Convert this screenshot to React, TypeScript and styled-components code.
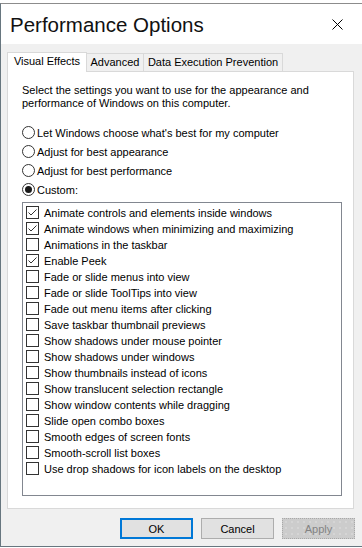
import React from "react";
import styled, { createGlobalStyle, css } from "styled-components";

const GlobalStyle = createGlobalStyle`
  html, body {
    margin: 0;
    padding: 0;
    background: #ffffff;
  }
  body {
    font-family: "Liberation Sans", Arial, sans-serif;
    font-size: 11px;
    color: #000000;
  }
  * { box-sizing: border-box; }
`;

const Window = styled.div`
  width: 362px;
  height: 548px;
  display: flex;
  flex-direction: column;
  background: #ffffff;
`;

const TopStrip = styled.div`
  height: 3px;
  flex: none;
  background: #ffffff;
`;

const Frame = styled.div`
  flex: 1;
  display: flex;
  flex-direction: column;
  border-top: 1px solid #8c8c8c;
  border-left: 1px solid #67767f;
  border-bottom: 1px solid #67767f;
  margin-bottom: 1px;
`;

const TitleBar = styled.div`
  height: 40px;
  flex: none;
  display: flex;
  align-items: center;
  justify-content: space-between;
  padding: 1px 19px 0 9px;
  background: #ffffff;
`;

const Title = styled.div`
  font-size: 20.5px;
  color: #111111;
  line-height: 1.15;
`;

const CloseButton = styled.div`
  width: 11px;
  height: 11px;
  display: flex;
  margin-top: 0px;
`;

const Body = styled.div`
  flex: 1;
  display: flex;
  flex-direction: column;
  background: #f0f0f0;
  padding: 8px 0 0 6px;
`;

const TabStrip = styled.div`
  display: flex;
  align-items: flex-end;
  height: 19px;
  flex: none;
`;

const Tab = styled.div<{ $active?: boolean; $width: number }>`
  width: ${(p) => p.$width}px;
  line-height: 13px;
  text-align: center;
  white-space: nowrap;
  border: 1px solid #d9d9d9;
  border-bottom: none;
  ${(p) =>
    p.$active
      ? css`
          height: 20px;
          padding-top: 2px;
          margin-bottom: -1px;
          background: #ffffff;
          position: relative;
          z-index: 1;
        `
      : css`
          height: 18px;
          padding-top: 2px;
          margin-left: -1px;
          background: #f0f0f0;
        `}
`;

const Panel = styled.div`
  height: 438px;
  flex: none;
  margin-right: 8px;
  border: 1px solid #d9d9d9;
  background: #ffffff;
  padding: 12px 11px 0 14px;
  display: flex;
  flex-direction: column;
`;

const Intro = styled.p`
  margin: 0;
  line-height: 13px;
`;

const RadioGroup = styled.div`
  margin-top: 13px;
  display: flex;
  flex-direction: column;
`;

const RadioRow = styled.div`
  height: 19px;
  display: flex;
  align-items: center;
  gap: 2px;
`;

const RadioCircle = styled.span<{ $checked?: boolean }>`
  width: 13px;
  height: 13px;
  border: 1px solid #333333;
  border-radius: 50%;
  background: #ffffff;
  display: flex;
  align-items: center;
  justify-content: center;
  flex: none;
  &::after {
    content: "";
    width: 7px;
    height: 7px;
    border-radius: 50%;
    background: ${(p) => (p.$checked ? "#1a1a1a" : "transparent")};
  }
`;

const ListBox = styled.div`
  margin-top: 3px;
  height: 294px;
  flex: none;
  border: 1px solid #828790;
  padding: 1px 0 0 3px;
  display: flex;
  flex-direction: column;
`;

const CheckRow = styled.div`
  height: 16px;
  display: flex;
  align-items: flex-start;
  white-space: nowrap;
`;

const CheckBox = styled.span`
  width: 13px;
  height: 13px;
  margin-top: 2px;
  border: 1px solid #333333;
  background: #ffffff;
  flex: none;
  display: flex;
  align-items: center;
  justify-content: center;
`;

const CheckLabel = styled.span`
  margin-left: 5px;
  line-height: 16px;
  padding-top: 1px;
`;

const ButtonRow = styled.div`
  display: flex;
  justify-content: flex-end;
  gap: 8px;
  padding-right: 7px;
  margin-top: 9px;
`;

const DialogButton = styled.div<{ $variant?: "default" | "normal" | "disabled" }>`
  width: 73px;
  height: 21px;
  display: flex;
  align-items: center;
  justify-content: center;
  background: #e1e1e1;
  border: 1px solid #adadad;
  ${(p) =>
    p.$variant === "default" &&
    css`
      border: 2px solid #0078d7;
    `}
  ${(p) =>
    p.$variant === "disabled" &&
    css`
      background-color: #cccccc;
      background-image: radial-gradient(circle, #dadada 0.6px, transparent 0.9px);
      background-size: 6px 6px;
      border: 1px dotted #a8a8a8;
      color: #838383;
    `}
`;

const items: { label: string; checked: boolean }[] = [
  { label: "Animate controls and elements inside windows", checked: true },
  { label: "Animate windows when minimizing and maximizing", checked: true },
  { label: "Animations in the taskbar", checked: false },
  { label: "Enable Peek", checked: true },
  { label: "Fade or slide menus into view", checked: false },
  { label: "Fade or slide ToolTips into view", checked: false },
  { label: "Fade out menu items after clicking", checked: false },
  { label: "Save taskbar thumbnail previews", checked: false },
  { label: "Show shadows under mouse pointer", checked: false },
  { label: "Show shadows under windows", checked: false },
  { label: "Show thumbnails instead of icons", checked: false },
  { label: "Show translucent selection rectangle", checked: false },
  { label: "Show window contents while dragging", checked: false },
  { label: "Slide open combo boxes", checked: false },
  { label: "Smooth edges of screen fonts", checked: false },
  { label: "Smooth-scroll list boxes", checked: false },
  { label: "Use drop shadows for icon labels on the desktop", checked: false },
];

const radios = [
  { label: "Let Windows choose what's best for my computer", checked: false },
  { label: "Adjust for best appearance", checked: false },
  { label: "Adjust for best performance", checked: false },
  { label: "Custom:", checked: true },
];

const CheckMark = () => (
  <svg width="11" height="11" viewBox="0 0 11 11">
    <polyline points="1.5,5.5 4,8 9.5,2.5" fill="none" stroke="#333333" strokeWidth="1" />
  </svg>
);

export default function App() {
  return (
    <>
      <GlobalStyle />
      <Window>
        <TopStrip />
        <Frame>
          <TitleBar>
            <Title>Performance Options</Title>
            <CloseButton>
              <svg width="11" height="11" viewBox="0 0 11 11">
                <path d="M0.5 0.5 L10.5 10.5 M10.5 0.5 L0.5 10.5" stroke="#000000" strokeWidth="1" fill="none" />
              </svg>
            </CloseButton>
          </TitleBar>
          <Body>
            <TabStrip>
              <Tab $active $width={80}>Visual Effects</Tab>
              <Tab $width={58}>Advanced</Tab>
              <Tab $width={140}>Data Execution Prevention</Tab>
            </TabStrip>
            <Panel>
              <Intro>
                Select the settings you want to use for the appearance and
                <br />
                performance of Windows on this computer.
              </Intro>
              <RadioGroup>
                {radios.map((r) => (
                  <RadioRow key={r.label}>
                    <RadioCircle $checked={r.checked} />
                    <span>{r.label}</span>
                  </RadioRow>
                ))}
              </RadioGroup>
              <ListBox>
                {items.map((it) => (
                  <CheckRow key={it.label}>
                    <CheckBox>{it.checked && <CheckMark />}</CheckBox>
                    <CheckLabel>{it.label}</CheckLabel>
                  </CheckRow>
                ))}
              </ListBox>
            </Panel>
            <ButtonRow>
              <DialogButton $variant="default">OK</DialogButton>
              <DialogButton $variant="normal">Cancel</DialogButton>
              <DialogButton $variant="disabled">Apply</DialogButton>
            </ButtonRow>
          </Body>
        </Frame>
      </Window>
    </>
  );
}
